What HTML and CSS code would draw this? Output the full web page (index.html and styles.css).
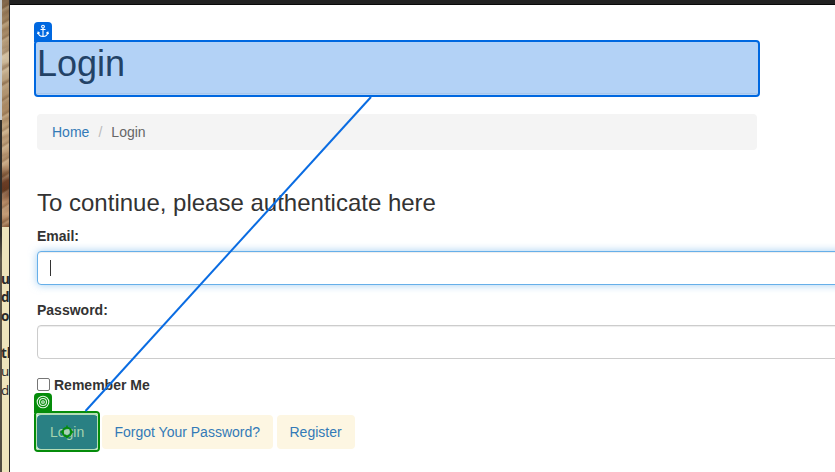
FILE: index.html
```html
<!DOCTYPE html>
<html lang="en">
<head>
<meta charset="utf-8">
<title>Login</title>
<link rel="stylesheet" href="styles.css">
</head>
<body>
<div class="screen">
  <aside class="backdrop">
    <div class="edge"></div>
    <div class="side">
      <div class="fur"></div>
      <div class="note"><b>u</b><b>d</b><b>o</b><br><b>th</b><span>u</span><span>d</span></div>
    </div>
  </aside>
  <main class="page">
    <div class="topbar"></div>
    <div class="content">
      <header class="page-header"><h1>Login</h1></header>
      <nav class="breadcrumb"><a href="#">Home</a><span class="sep">/</span><span>Login</span></nav>
      <form>
        <h3>To continue, please authenticate here</h3>
        <label class="field-label" for="email">Email:</label>
        <div class="control focused" id="email"><span class="caret"></span></div>
        <label class="field-label" for="password">Password:</label>
        <div class="control" id="password"></div>
        <label class="remember"><span class="box"></span>Remember Me</label>
        <div class="actions">
          <a class="btn primary" href="#">Login</a>
          <a class="btn forgot" href="#">Forgot Your Password?</a>
          <a class="btn register" href="#">Register</a>
        </div>
      </form>
    </div>
  </main>
  <div class="mark anchor">
    <div class="tab">
      <svg width="18" height="18" viewBox="0 0 18 18" fill="none" stroke="#fff" stroke-width="1.1"><circle cx="9" cy="4.6" r="1.4"/><path d="M9 6v8.300M6.500 7.500h5M4 10.200c.3 2.600 2.200 4.200 5 4.200s4.700-1.600 5-4.200M3.500 12l.6-1.900 1.600 1.200M14.500 12l-.6-1.900-1.600 1.200"/></svg>
    </div>
  </div>
  <div class="mark target">
    <div class="tab">
      <svg width="18" height="18" viewBox="0 0 18 18" fill="none" stroke="#e5f5e5" stroke-width="1.1"><circle cx="9" cy="9" r="5.8"/><circle cx="9" cy="9" r="3.5"/><circle cx="9" cy="9" r="1.3"/></svg>
    </div>
  </div>
  <svg class="link" width="835" height="472" fill="none">
    <path d="M371 97L85.500 411" stroke="#0a6ce2" stroke-width="2"/>
    <circle cx="67" cy="432" r="2.800" fill="#a9d3b4"/>
    <circle cx="67" cy="432" r="4.200" stroke="#058c0a" stroke-width="2"/>
    <path d="M67 425.500v2M67 436.500v2M60.500 432h2M71.500 432h2" stroke="#058c0a" stroke-width="1.500"/>
  </svg>
</div>
</body>
</html>
```
FILE: styles.css
```css
* { box-sizing: border-box; }
body { margin: 0; background: #fff; color: #333; font: 14px/20px "Liberation Sans", Arial, sans-serif; }
a { color: #337ab7; text-decoration: none; }
.screen { position: relative; display: flex; width: 835px; height: 472px; overflow: hidden; }

.backdrop { display: flex; width: 10px; flex: none; border-right: 1px solid #2b2928; overflow: hidden; }
.edge { width: 2px; flex: none; background: linear-gradient(#c9cdd0 0 120px, #302e2b 120px 235px, #625b4c 260px, #514b40 100%); }
.side { width: 7px; flex: none; background: #eee4bc; }
.fur {
  height: 227px;
  background:
    repeating-linear-gradient(148deg, #59371900 0 4px, #59371944 7px, #fff1d333 9px, #59371900 13px),
    repeating-linear-gradient(162deg, #6a442400 0 9px, #6a442433 12px, #6a442400 17px),
    linear-gradient(#80654a, #a88c68 25px, #ad9270 42px, #d0bea0 58px, #b59b79 82px, #a98863 108px, #c4a782 130px, #bd9b78 165px, #6c3f26 180px, #633620 190px, #b68b67 202px, #c49d78 214px, #90613f 227px);
}
.note { display: flex; flex-direction: column; margin-left: -1px; padding-top: 42.500px; color: #292929; font: 13.500px/18.500px "Open Sans", sans-serif; }
.note b { font-weight: 700; }

.page { flex: 1; min-width: 0; overflow: hidden; }
.topbar { height: 5px; background: #222; border-bottom: 1px solid #080808; }
.content { padding: 39px 0 0 27px; }
.page-header { width: 720px; height: 50px; margin-bottom: 20px; border-bottom: 1px solid #eee; }
h1 { margin: 0; font-size: 36px; line-height: 40px; font-weight: 400; }
.breadcrumb { display: flex; width: 720px; height: 36px; margin-bottom: 40px; padding: 8px 15px; border-radius: 4px; background: #f4f4f4; color: #666; }
.sep { width: 22px; text-align: center; color: #bbb; }
h3 { margin: 0 0 10px; font-size: 24px; line-height: 26px; font-weight: 400; }
form { width: 880px; }
.field-label { display: block; margin-bottom: 5px; font-weight: 700; }
.control { height: 34px; margin-bottom: 15px; padding: 8px 12px; border: 1px solid #ccc; border-radius: 4px; background: #fff; box-shadow: inset 0 1px 1px #00000013; }
.focused { border-color: #66afe9; box-shadow: inset 0 1px 1px #00000013, 0 0 8px #66afe999; }
.caret { display: block; width: 1px; height: 16px; background: #333; }
.remember { display: flex; gap: 4px; height: 20px; margin: 16px 0 20px; font-weight: 700; }
.box { width: 13px; height: 13px; margin-top: 3px; border: 1px solid #767676; border-radius: 2px; background: #fff; }
.actions { display: flex; gap: 4px; }
.btn { height: 34px; padding: 7px 12.500px; border-radius: 4px; background: #fdf6e2; }
.primary { width: 61px; padding-left: 13px; background: #298083; color: #a6d5ad; }
.forgot { width: 171px; padding-left: 12.500px; }
.register { width: 78px; }

.mark { position: absolute; left: 34px; border: 2px solid; border-radius: 4px; }
.anchor { top: 40px; width: 726px; height: 57px; border-color: #0068e0; background: #0068e04c; }
.target { top: 411px; width: 66px; height: 41px; border-color: #058c0a; }
.target::after { content: ""; position: absolute; inset: 0; border: 1px solid #b5deb6; border-top-width: 2px; border-radius: 3px; }
.tab { position: absolute; left: -2px; top: -20px; width: 18px; height: 20px; border-radius: 4px 4px 0 0; background: #0068e0; }
.target .tab { background: #058c0a; }
.tab svg { display: block; }
.link { position: absolute; left: 0; top: 0; }
```
